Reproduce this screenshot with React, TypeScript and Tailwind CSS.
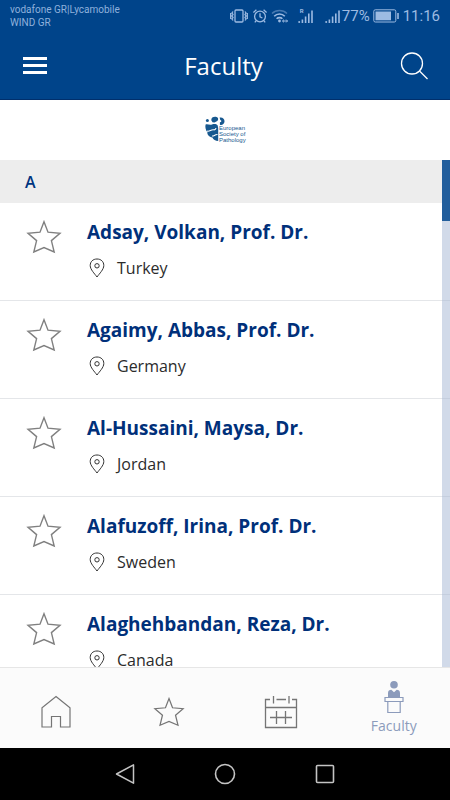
import { useState } from "react";

interface Person {
  name: string;
  country: string;
}

const FACULTY: Person[] = [
  { name: "Adsay, Volkan, Prof. Dr.", country: "Turkey" },
  { name: "Agaimy, Abbas, Prof. Dr.", country: "Germany" },
  { name: "Al-Hussaini, Maysa, Dr.", country: "Jordan" },
  { name: "Alafuzoff, Irina, Prof. Dr.", country: "Sweden" },
  { name: "Alaghehbandan, Reza, Dr.", country: "Canada" },
];

function StarIcon({ className }: { className: string }) {
  return (
    <svg viewBox="0 0 36 34" className={className} fill="none" stroke="currentColor" strokeWidth="1.4" aria-hidden="true">
      <path d="M18 1.8 L22 12.2 L34 13.2 L25.4 20.6 L28.2 32 L18 27.6 L7.8 32 L10.6 20.6 L2 13.2 L14 12.2 Z" />
    </svg>
  );
}

function PinIcon() {
  return (
    <svg viewBox="0 0 16 20" className="h-5 w-4" fill="none" stroke="#333" aria-hidden="true">
      <path d="M8 19 C5.5 15.5 1.2 11.5 1.2 7.5 C1.2 3.6 4 1 8 1 C12 1 14.8 3.6 14.8 7.5 C14.8 11.5 10.5 15.5 8 19 Z" />
      <circle cx="8" cy="7.8" r="2.2" />
    </svg>
  );
}

function SignalBars() {
  return (
    <svg viewBox="0 0 15 16" className="h-4 w-[15px]" fill="currentColor" aria-hidden="true">
      <circle cx="1.2" cy="14" r="1" />
      <path d="M3.6 11.5h1.6V15H3.6zM6.8 8.5h1.6V15H6.8zM10 5.5h1.6V15H10zM13.2 2.5h1.6V15h-1.6z" />
    </svg>
  );
}

function StatusBar() {
  return (
    <div className="flex h-8 items-center justify-between px-[10px] font-['Roboto',sans-serif] text-[#8fb1dc]">
      <div className="text-[10px] leading-[13px]">
        <div>vodafone GR|Lycamobile</div>
        <div>WIND GR</div>
      </div>
      <div className="flex items-center text-[#9dbbe2]">
        {/* vibrate */}
        <svg viewBox="0 0 18 16" className="h-4 w-[18px]" fill="none" stroke="currentColor" strokeWidth="1.3" aria-hidden="true">
          <rect x="5" y="2" width="8" height="12" rx="1" />
          <path d="M3 3.5L2 5L3 6.5L2 8L3 9.500L2 11L3 12.500M0.700 5v6M15 3.500L16 5L15 6.500L16 8L15 9.500L16 11L15 12.500M17.300 5v6" />
        </svg>
        {/* alarm */}
        <svg viewBox="0 0 16 16" className="ml-1 h-4 w-4" fill="none" stroke="currentColor" strokeWidth="1.3" aria-hidden="true">
          <circle cx="8" cy="8.5" r="5.4" />
          <path d="M8 5.3v3.5l2.4 1.2M1.4 4.4l3-2.6M14.6 4.4l-3-2.6M4.2 12.6l-1.4 1.8M11.8 12.6l1.4 1.8" />
        </svg>
        {/* wifi */}
        <svg viewBox="0 0 18 16" className="ml-[3px] h-4 w-[18px]" fill="none" stroke="currentColor" aria-hidden="true">
          <path d="M1 5.5C5 1.4 12 1.4 16 5.5" strokeWidth="1.4" opacity=".45" />
          <path d="M3.2 8.2C6 5.2 11 5.2 13.8 8.2M5.6 10.8C7.2 9.2 9.8 9.2 11.4 10.8" strokeWidth="1.6" />
          <circle cx="8.5" cy="13" r="1.4" fill="currentColor" stroke="none" />
          <path d="M11.5 13h5M13 11.6L11.5 13L13 14.4M15.2 11.6L16.5 13L15.2 14.4" />
        </svg>
        <div className="relative ml-[9px]">
          <SignalBars />
          <span className="absolute left-[2px] top-0 text-[6px] font-bold leading-[6px]">R</span>
        </div>
        <div className="ml-3">
          <SignalBars />
        </div>
        <span className="ml-[2px] text-[15px]">77%</span>
        <svg viewBox="0 0 26 14" className="ml-[3px] h-[14px] w-[26px]" fill="none" stroke="currentColor" aria-hidden="true">
          <rect x="0.8" y="0.8" width="22" height="12.2" rx="1.5" />
          <rect x="2.500" y="2.500" width="15.500" height="8.800" fill="currentColor" stroke="none" />
          <path d="M25 4v6" strokeWidth="1.6" />
        </svg>
        <span className="ml-1 text-[15px]">11:16</span>
      </div>
    </div>
  );
}

function Logo() {
  return (
    <div className="relative h-7 w-10 text-[#17588f]">
      <svg viewBox="0 0 20 28" className="h-7 w-5" fill="currentColor" aria-hidden="true">
        <circle cx="2.400" cy="4.600" r="1.500" />
        <path d="M6.300 4.200C6 1.600 8.500 0.500 10.800 0.800C13 1.200 13.600 2.600 13 4C12.200 5.800 10.600 5.700 9.500 6.500L7.500 6.200Z" />
        <path d="M14.600 1.600C17.500 1 19.800 3 19.500 5.800C19.200 8.300 17 9.500 14.900 8.800V6.300C16.500 6.400 17 4.300 15.300 4Z" />
        <path d="M0.600 8.400C2.500 7.600 4.500 9.200 7 8.400C9 7.600 11.400 7.800 12.600 9.200L13.200 12V25C10.500 24.800 8.200 23.500 7.400 21.400C4 20.800 2 18.600 2.400 16.200C0.500 14 0 10.500 0.600 8.400Z" />
        <path d="M2 15C4.500 16 6 13.300 8.600 13.800C10 14 10.800 13 11 12M7 20C9 20.500 9.600 18.300 12.500 18.500" fill="none" stroke="#fff" strokeWidth="1.100" />
      </svg>
      <div className="absolute left-[14px] top-[9px] font-['Liberation_Sans',sans-serif] text-[6px] leading-[6px]">
        <div>European</div>
        <div className="whitespace-nowrap">Society of</div>
        <div>Pathology</div>
      </div>
    </div>
  );
}

function PersonRow({ person }: { person: Person }) {
  const [starred, setStarred] = useState(false);

  return (
    <li className="flex h-[98px] shrink-0 border-b border-[#e4e6e9] pl-[26px] pt-4">
      <button
        aria-label={`Add ${person.name} to favourites`}
        aria-pressed={starred}
        onClick={() => setStarred(!starred)}
        className={`h-9 w-9 ${starred ? "text-[#00357f]" : "text-[#808080]"}`}
      >
        <StarIcon className="h-9 w-9" />
      </button>
      <div className="ml-[25px]">
        <h2 className="text-[19px] font-bold leading-[26px] text-[#00307a]">{person.name}</h2>
        <div className="mt-3 flex items-center gap-3 pl-[2px] text-base leading-[22px] text-[#2b2b2b]">
          <PinIcon />
          <span>{person.country}</span>
        </div>
      </div>
    </li>
  );
}

function TabBar() {
  return (
    <nav className="grid h-[81px] shrink-0 grid-cols-4 border-t border-[#e6e6e6] bg-[#fbfbfb] text-[#757575]">
      <a href="#home" aria-label="Home" className="flex items-center justify-center pt-2">
        <svg viewBox="0 0 32 34" className="h-[34px] w-8" fill="none" stroke="currentColor" strokeWidth="1.2" aria-hidden="true">
          <path d="M16 1.5L30 12.8V32H20.5V21.5H11.5V32H2V12.8Z" />
        </svg>
      </a>
      <a href="#favourites" aria-label="Favourites" className="flex items-center justify-center pt-2">
        <StarIcon className="h-[30px] w-8" />
      </a>
      <a href="#programme" aria-label="Programme" className="flex items-center justify-center pt-2">
        <svg viewBox="0 0 34 34" className="h-[34px] w-[34px]" fill="none" stroke="currentColor" strokeWidth="1.3" aria-hidden="true">
          <path d="M6 4.500H1.500V32.500H32.500V4.500H28M12.500 4.500h9.500M9.500 1v7.500M25 1v7.500M1.500 12.500h31M6 22.500h22M12.500 16v13M21.500 16v13" />
        </svg>
      </a>
      <a href="#faculty" aria-current="page" className="flex flex-col items-center gap-[2px] pt-3 text-[#8c9bbb]">
        <svg viewBox="0 0 20 34" className="h-[34px] w-5" fill="currentColor" aria-hidden="true">
          <circle cx="10" cy="4.800" r="3.800" />
          <path d="M4 17V13C4 11 5.500 9.800 7.300 9.800L10 12.300L12.700 9.800C14.500 9.800 16 11 16 13V17Z" />
          <path d="M1 17.500H19V21.500H1ZM3.800 21.500H16.200V32.500H3.800Z" fill="#fbfbfb" stroke="currentColor" strokeWidth="1.200" />
        </svg>
        <span className="text-sm leading-5">Faculty</span>
      </a>
    </nav>
  );
}

function SystemBar() {
  return (
    <div className="flex h-[52px] shrink-0 items-center justify-center gap-[76px] bg-black text-[#c4c4c4]">
      <button aria-label="Back">
        <svg viewBox="0 0 24 24" className="h-6 w-6" fill="none" stroke="currentColor" strokeWidth="1.5" strokeLinejoin="round" aria-hidden="true">
          <path d="M20.500 2.800V21.200L3.500 12Z" />
        </svg>
      </button>
      <button aria-label="Home screen">
        <svg viewBox="0 0 24 24" className="h-6 w-6" fill="none" stroke="currentColor" strokeWidth="1.6" aria-hidden="true">
          <circle cx="12" cy="12" r="9.500" />
        </svg>
      </button>
      <button aria-label="Recent apps">
        <svg viewBox="0 0 24 24" className="h-6 w-6" fill="none" stroke="currentColor" strokeWidth="1.6" aria-hidden="true">
          <rect x="3.500" y="3.500" width="17" height="17" rx="1" />
        </svg>
      </button>
    </div>
  );
}

export default function App() {
  return (
    <div className="flex h-screen flex-col overflow-hidden bg-white font-['Open_Sans',sans-serif]">
      <header className="shrink-0 border-b border-[#002f6c] bg-[#00448a]">
        <StatusBar />
        <div className="flex h-[67px] items-center justify-between pl-[23px] pr-[22px] text-white">
          <button aria-label="Menu">
            <svg viewBox="0 0 24 18" className="h-[18px] w-6" fill="currentColor" aria-hidden="true">
              <path d="M0 0h24v3H0zM0 7h24v3H0zM0 14h24v3H0z" />
            </svg>
          </button>
          <h1 className="text-2xl">Faculty</h1>
          <button aria-label="Search">
            <svg viewBox="0 0 28 28" className="h-7 w-7" fill="none" stroke="currentColor" strokeWidth="1.300" aria-hidden="true">
              <circle cx="12" cy="11.500" r="10.500" />
              <path d="M19.500 19L27.500 27" />
            </svg>
          </button>
        </div>
      </header>

      <div className="flex h-[60px] shrink-0 items-center justify-center">
        <Logo />
      </div>

      <main className="relative flex min-h-0 flex-1 flex-col">
        <div className="flex h-[43px] shrink-0 items-center bg-[#ededed] pl-[25px] text-base font-semibold text-[#00357f]">A</div>
        <ul className="min-h-0 flex-1 overflow-y-auto [scrollbar-width:none]">
          {FACULTY.map((person) => (
            <PersonRow key={person.name} person={person} />
          ))}
        </ul>
        {/* alphabet scroll track */}
        <div className="absolute inset-y-0 right-0 w-2 bg-[#a3b5d3]/50">
          <div className="h-[61px] bg-[#225e9c]" />
        </div>
      </main>

      <TabBar />
      <SystemBar />
    </div>
  );
}
